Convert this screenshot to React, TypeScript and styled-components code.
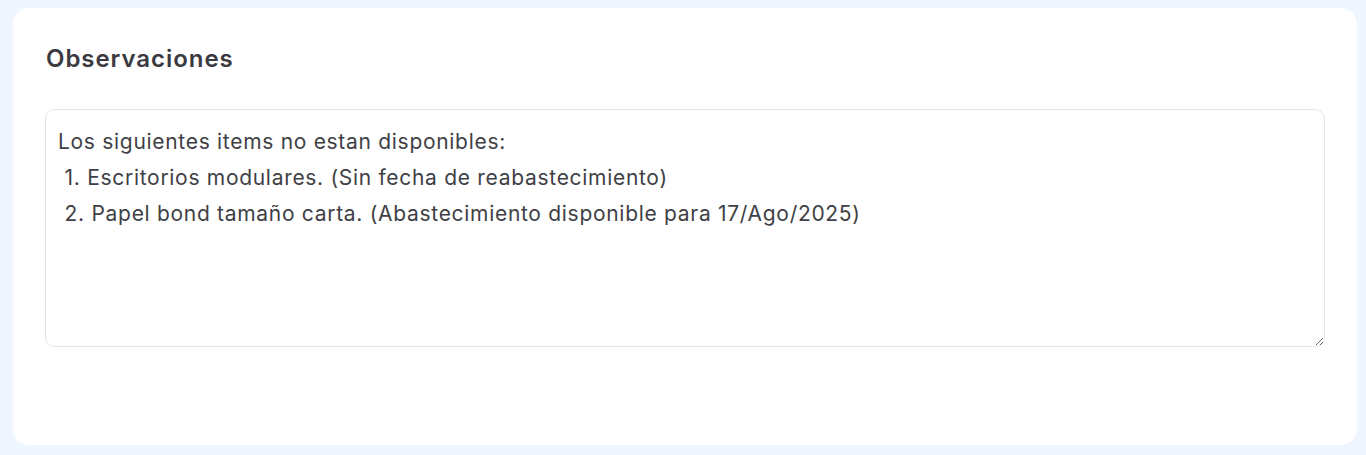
import React from "react";
import styled, { createGlobalStyle } from "styled-components";

const Global = createGlobalStyle`
  html, body { margin: 0; padding: 0; background: #eff6ff; }
  body { font-family: Inter, "Noto Sans", Arial, sans-serif; }
  * { box-sizing: border-box; }
`;

const Page = styled.div`
  padding: 8px 9px 10px 13px;
  background: #eff6ff;
`;

const Card = styled.section`
  background: #ffffff;
  border-radius: 16px;
  padding: 36px 32px;
  height: 437px;
  display: flex;
  flex-direction: column;
`;

const Title = styled.h2`
  margin: 0 0 0 1px;
  font-family: Inter, sans-serif;
  font-size: 24px;
  line-height: 30px;
  font-weight: 600;
  letter-spacing: 0.95px;
  color: #3a3a40;
`;

const Notes = styled.textarea`
  margin-top: 35px;
  width: 100%;
  height: 238px;
  padding: 14px 12px;
  border: 1px solid #e4e4e7;
  border-radius: 10px;
  font-family: Inter, sans-serif;
  font-size: 21px;
  line-height: 36px;
  letter-spacing: 0.7px;
  color: #3f3f46;
  background: #ffffff;
  outline: none;
  resize: vertical;
`;

const text = `Los siguientes items no estan disponibles:
 1. Escritorios modulares. (Sin fecha de reabastecimiento)
 2. Papel bond tamaño carta. (Abastecimiento disponible para 17/Ago/2025)`;

export default function App() {
  return (
    <Page>
      <Global />
      <Card>
        <Title>Observaciones</Title>
        <Notes defaultValue={text} />
      </Card>
    </Page>
  );
}
